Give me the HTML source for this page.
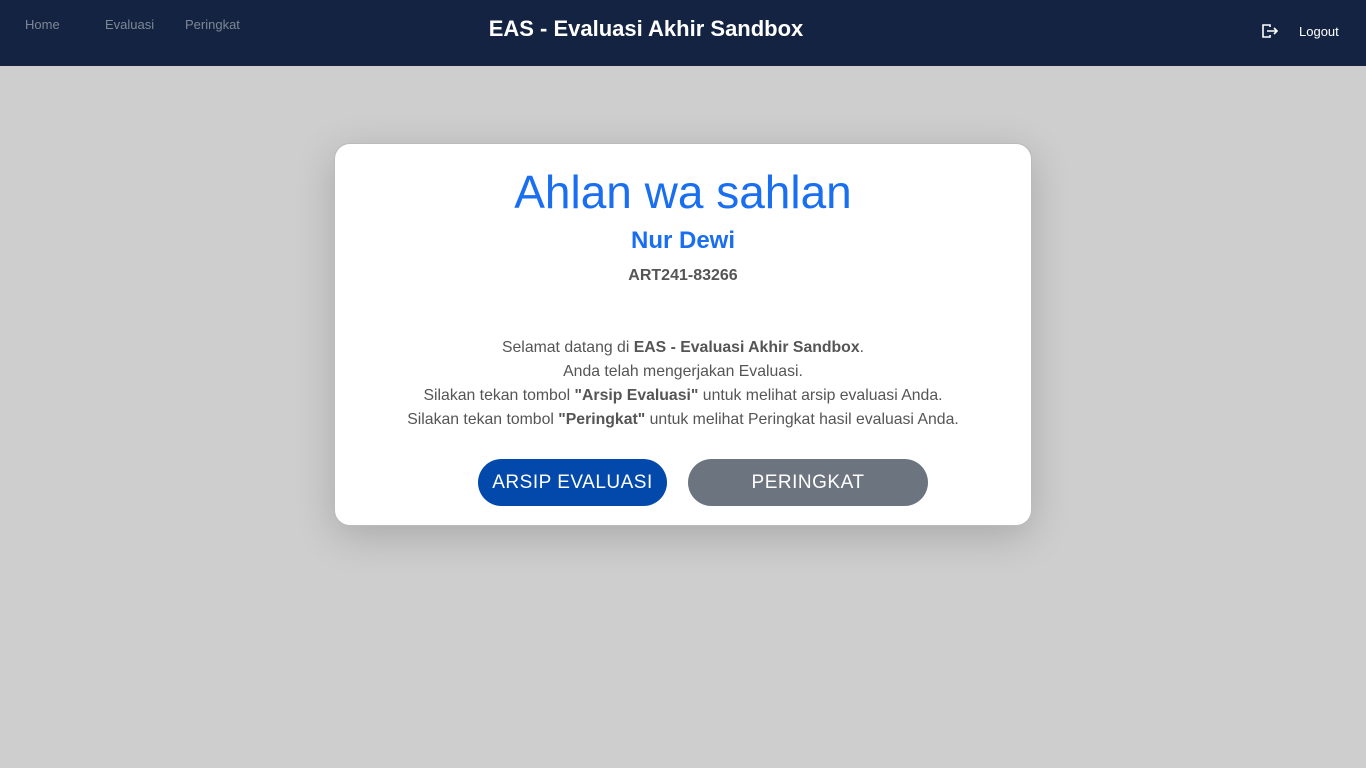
<!DOCTYPE html>
<html><head><meta charset="utf-8"><style>
*{box-sizing:border-box;margin:0;padding:0}
body{width:1366px;height:768px;background:#cecece;font-family:"Liberation Sans","DejaVu Sans",sans-serif;overflow:hidden;position:relative}
.hdr{position:absolute;left:0;top:0;width:1366px;height:66px;background:#132341}
.nav{position:absolute;top:17px;font-size:13px;color:#7f8794}
.title{position:absolute;left:0;width:1292px;text-align:center;top:16px;color:#fff;font-weight:bold;font-size:22px}
.logout{position:absolute;left:1299px;top:24px;color:#fff;font-size:13px}
.card{position:absolute;left:334px;top:143px;width:698px;height:383px;background:#fff;border-radius:16px;border:1px solid #bbb;box-shadow:0 10px 40px rgba(0,0,0,.18);text-align:center}
h1{font-weight:normal;color:#1a6ef0;font-size:46px;margin-top:20px;line-height:56px}
.name{color:#1a6ef0;font-weight:bold;font-size:24px;margin-top:7px}
.id{color:#555;font-weight:bold;font-size:16px;margin-top:12px}
.txt{color:#555;font-size:15.8px;line-height:24px;margin-top:51px}
.btn{position:absolute;top:315px;height:47px;border-radius:24px;color:#fff;font-size:19px;letter-spacing:.5px;line-height:47px;text-align:center}
</style></head><body>
<div class="hdr">
<div class="nav" style="left:25px">Home</div>
<div class="nav" style="left:105px">Evaluasi</div>
<div class="nav" style="left:185px">Peringkat</div>
<div class="title">EAS - Evaluasi Akhir Sandbox</div>
<svg style="position:absolute;left:1261px;top:23px" width="18" height="16" viewBox="0 0 18 16" fill="none" stroke="#fff" stroke-width="1.6"><path d="M9 4V2H2v12h7v-2"/><path d="M6 8h10M13 5l3 3-3 3"/></svg>
<div class="logout">Logout</div>
</div>
<div class="card">
<h1>Ahlan wa sahlan</h1>
<div class="name">Nur Dewi</div>
<div class="id">ART241-83266</div>
<div class="txt">Selamat datang di <b>EAS - Evaluasi Akhir Sandbox</b>.<br>Anda telah mengerjakan Evaluasi.<br>Silakan tekan tombol <b>"Arsip Evaluasi"</b> untuk melihat arsip evaluasi Anda.<br>Silakan tekan tombol <b>"Peringkat"</b> untuk melihat Peringkat hasil evaluasi Anda.</div>
<div class="btn" style="left:143px;width:189px;background:#0249ab">ARSIP EVALUASI</div>
<div class="btn" style="left:353px;width:240px;background:#6c747f">PERINGKAT</div>
</div>
</body></html>
